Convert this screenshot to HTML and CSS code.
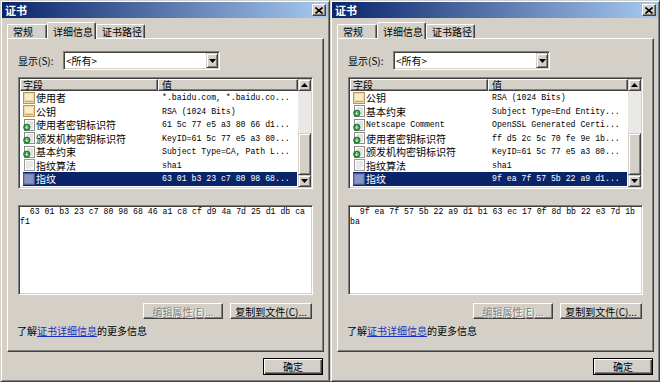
FILE: index.html
```html
<!DOCTYPE html>
<html lang="zh-CN">
<head>
    <meta charset="UTF-8">
    <title>证书</title>
    <link rel="stylesheet" href="styles.css">
</head>
<body>
    <svg class="defs" width="0" height="0">
        <symbol id="ico-cert" viewBox="0 0 12 12">
            <rect x="0.5" y="0.5" width="11" height="11" fill="#efd7a2" stroke="#b8955a"/>
            <rect x="2" y="2" width="8" height="6" fill="#f9ebc8"/>
            <path d="M2 9.5h8" stroke="#d2a868"/>
        </symbol>
        <symbol id="ico-ext" viewBox="0 0 12 12">
            <rect x="1.5" y="0.5" width="10" height="11" fill="#fff" stroke="#8c8c8c"/>
            <path d="M4 3h6M4 5h6M6 7h4M6 9h4" stroke="#c4c4c4"/>
            <circle cx="3.8" cy="8.2" r="3.2" fill="#2f9a3c" stroke="#1c6a26" stroke-width="0.8"/>
            <path d="M3.8 6.3v3.2M2.5 8.3l1.3 1.3 1.3-1.3" stroke="#fff" stroke-width="0.9" fill="none"/>
        </symbol>
        <symbol id="ico-prop" viewBox="0 0 12 12">
            <rect x="1.5" y="0.5" width="10" height="11" fill="#fff" stroke="#9a9a9a"/>
            <path d="M3 3h7M3 5h7M3 7h7M3 9h5" stroke="#d0d0d0"/>
        </symbol>
        <symbol id="ico-sel" viewBox="0 0 12 12">
            <rect x="0.5" y="0.5" width="11" height="11" fill="#7482b8" stroke="#4a5a98"/>
            <rect x="2" y="2" width="8" height="8" fill="#8894c4"/>
        </symbol>
    </svg>

    <div class="desktop">
        <!-- first certificate -->
        <div class="window">
            <div class="titlebar">
                <span class="title">证书</span>
                <span class="close-btn"><svg width="8" height="7" viewBox="0 0 8 7"><path d="M0.5 0.5l7 6M7.5 0.5l-7 6" stroke="#000" stroke-width="1.6"/></svg></span>
            </div>
            <div class="tabs">
                <div class="tab tab-general">常规</div>
                <div class="tab tab-active">详细信息</div>
                <div class="tab tab-path">证书路径</div>
            </div>
            <div class="panel">
                <div class="show-row">
                    <span class="show-label">显示(S):</span>
                    <div class="combo">
                        <span class="combo-text">&lt;所有&gt;</span>
                        <span class="combo-btn"><svg width="7" height="4" viewBox="0 0 7 4"><polygon points="0,0 7,0 3.5,4" fill="#000"/></svg></span>
                    </div>
                </div>
                <div class="listview">
                    <div class="list-body">
                        <div class="list-header">
                            <div class="col-field">字段</div>
                            <div class="col-value">值</div>
                        </div>
                        <div class="row">
                            <div class="col-field"><svg class="ico"><use href="#ico-cert"/></svg>使用者</div>
                            <div class="col-value mono">*.baidu.com, *.baidu.co...</div>
                        </div>
                        <div class="row">
                            <div class="col-field"><svg class="ico"><use href="#ico-cert"/></svg>公钥</div>
                            <div class="col-value mono">RSA (1024 Bits)</div>
                        </div>
                        <div class="row">
                            <div class="col-field"><svg class="ico"><use href="#ico-ext"/></svg>使用者密钥标识符</div>
                            <div class="col-value mono">61 5c 77 e5 a3 80 66 d1...</div>
                        </div>
                        <div class="row">
                            <div class="col-field"><svg class="ico"><use href="#ico-ext"/></svg>颁发机构密钥标识符</div>
                            <div class="col-value mono">KeyID=61 5c 77 e5 a3 80...</div>
                        </div>
                        <div class="row">
                            <div class="col-field"><svg class="ico"><use href="#ico-ext"/></svg>基本约束</div>
                            <div class="col-value mono">Subject Type=CA, Path L...</div>
                        </div>
                        <div class="row">
                            <div class="col-field"><svg class="ico"><use href="#ico-prop"/></svg>指纹算法</div>
                            <div class="col-value mono">sha1</div>
                        </div>
                        <div class="row selected">
                            <div class="col-field"><svg class="ico"><use href="#ico-sel"/></svg>指纹</div>
                            <div class="col-value mono">63 01 b3 23 c7 80 98 68...</div>
                        </div>
                    </div>
                    <div class="vscroll">
                        <div class="sb-btn"><svg width="7" height="4" viewBox="0 0 7 4"><polygon points="0,4 7,4 3.5,0" fill="#000"/></svg></div>
                        <div class="sb-track"><div class="sb-thumb"></div></div>
                        <div class="sb-btn"><svg width="7" height="4" viewBox="0 0 7 4"><polygon points="0,0 7,0 3.5,4" fill="#000"/></svg></div>
                    </div>
                </div>
                <div class="detail mono">  63 01 b3 23 c7 80 98 68 46 a1 c8 cf d9 4a 7d 25 d1 db ca
f1</div>
                <div class="btn-row">
                    <button class="btn btn-edit" disabled>编辑属性(E)...</button>
                    <button class="btn btn-copy">复制到文件(C)...</button>
                </div>
                <p class="learn">了解<a href="#">证书详细信息</a>的更多信息</p>
            </div>
            <div class="footer">
                <button class="btn btn-ok">确定</button>
            </div>
        </div>

        <!-- second certificate -->
        <div class="window">
            <div class="titlebar">
                <span class="title">证书</span>
                <span class="close-btn"><svg width="8" height="7" viewBox="0 0 8 7"><path d="M0.5 0.5l7 6M7.5 0.5l-7 6" stroke="#000" stroke-width="1.6"/></svg></span>
            </div>
            <div class="tabs">
                <div class="tab tab-general">常规</div>
                <div class="tab tab-active">详细信息</div>
                <div class="tab tab-path">证书路径</div>
            </div>
            <div class="panel">
                <div class="show-row">
                    <span class="show-label">显示(S):</span>
                    <div class="combo">
                        <span class="combo-text">&lt;所有&gt;</span>
                        <span class="combo-btn"><svg width="7" height="4" viewBox="0 0 7 4"><polygon points="0,0 7,0 3.5,4" fill="#000"/></svg></span>
                    </div>
                </div>
                <div class="listview">
                    <div class="list-body">
                        <div class="list-header">
                            <div class="col-field">字段</div>
                            <div class="col-value">值</div>
                        </div>
                        <div class="row">
                            <div class="col-field"><svg class="ico"><use href="#ico-cert"/></svg>公钥</div>
                            <div class="col-value mono">RSA (1024 Bits)</div>
                        </div>
                        <div class="row">
                            <div class="col-field"><svg class="ico"><use href="#ico-ext"/></svg>基本约束</div>
                            <div class="col-value mono">Subject Type=End Entity...</div>
                        </div>
                        <div class="row">
                            <div class="col-field"><svg class="ico"><use href="#ico-ext"/></svg><span class="mono">Netscape Comment</span></div>
                            <div class="col-value mono">OpenSSL Generated Certi...</div>
                        </div>
                        <div class="row">
                            <div class="col-field"><svg class="ico"><use href="#ico-ext"/></svg>使用者密钥标识符</div>
                            <div class="col-value mono">ff d5 2c 5c 70 fe 9e 1b...</div>
                        </div>
                        <div class="row">
                            <div class="col-field"><svg class="ico"><use href="#ico-ext"/></svg>颁发机构密钥标识符</div>
                            <div class="col-value mono">KeyID=61 5c 77 e5 a3 80...</div>
                        </div>
                        <div class="row">
                            <div class="col-field"><svg class="ico"><use href="#ico-prop"/></svg>指纹算法</div>
                            <div class="col-value mono">sha1</div>
                        </div>
                        <div class="row selected">
                            <div class="col-field"><svg class="ico"><use href="#ico-sel"/></svg>指纹</div>
                            <div class="col-value mono">9f ea 7f 57 5b 22 a9 d1...</div>
                        </div>
                    </div>
                    <div class="vscroll">
                        <div class="sb-btn"><svg width="7" height="4" viewBox="0 0 7 4"><polygon points="0,4 7,4 3.5,0" fill="#000"/></svg></div>
                        <div class="sb-track"><div class="sb-thumb"></div></div>
                        <div class="sb-btn"><svg width="7" height="4" viewBox="0 0 7 4"><polygon points="0,0 7,0 3.5,4" fill="#000"/></svg></div>
                    </div>
                </div>
                <div class="detail mono">  9f ea 7f 57 5b 22 a9 d1 b1 63 ec 17 0f 8d bb 22 e3 7d 1b
ba</div>
                <div class="btn-row">
                    <button class="btn btn-edit" disabled>编辑属性(E)...</button>
                    <button class="btn btn-copy">复制到文件(C)...</button>
                </div>
                <p class="learn">了解<a href="#">证书详细信息</a>的更多信息</p>
            </div>
            <div class="footer">
                <button class="btn btn-ok">确定</button>
            </div>
        </div>
    </div>
</body>
</html>
```

FILE: styles.css
```css
body {
    margin: 0;
    background-color: #d4d0c8;
    font-family: "Noto Sans CJK SC", "Liberation Sans", sans-serif;
    font-size: 10px;
    color: #000;
}
.defs {
    display: block;
    width: 0;
    height: 0;
    overflow: hidden;
}
.desktop {
    display: flex;
    width: 660px;
    height: 382px;
    overflow: hidden;
}
.mono {
    font-family: "Liberation Mono", "DejaVu Sans Mono", monospace;
    font-size: 8.2px;
}
.window {
    width: 330px;
    height: 382px;
    box-sizing: border-box;
    display: flex;
    flex-direction: column;
    padding: 1px;
    background-color: #d4d0c8;
    border: 1px solid;
    border-color: #d4d0c8 #404040 #404040 #d4d0c8;
    box-shadow: inset 1px 1px #fff, inset -1px -1px #808080;
}
.titlebar {
    height: 16px;
    flex-shrink: 0;
    display: flex;
    align-items: center;
    justify-content: space-between;
    padding: 0 2px 0 3px;
    background: linear-gradient(to right, #0a246a, #a6caf0);
}
.title {
    color: #fff;
    font-weight: bold;
    font-size: 11px;
    line-height: 16px;
}
.close-btn {
    width: 14px;
    height: 12px;
    box-sizing: border-box;
    display: flex;
    align-items: center;
    justify-content: center;
    background-color: #d4d0c8;
    border: 1px solid;
    border-color: #fff #404040 #404040 #fff;
    box-shadow: inset -1px -1px #808080;
}

/* tabs */
.tabs {
    display: flex;
    align-items: flex-end;
    height: 16px;
    margin-top: 4px;
    padding-left: 5px;
    flex-shrink: 0;
}
.tab {
    height: 14px;
    box-sizing: border-box;
    padding-left: 5px;
    line-height: 13px;
    border: 1px solid;
    border-bottom: none;
    border-color: #fff #404040 transparent #fff;
    border-radius: 2px 2px 0 0;
    box-shadow: inset -1px 0 #808080;
    white-space: nowrap;
}
.tab-general {
    width: 40px;
}
.tab-active {
    width: 49px;
    height: 17px;
    padding-top: 2px;
    margin-bottom: -1px;
    position: relative;
    z-index: 1;
    background-color: #d4d0c8;
}
.tab-path {
    width: 49px;
}
.panel {
    height: 314px;
    flex-shrink: 0;
    box-sizing: border-box;
    margin: 0 4px 0 5px;
    padding: 12px 10px 0 10px;
    border: 1px solid;
    border-color: #fff #404040 #404040 #fff;
    box-shadow: inset -1px -1px #808080;
}

/* show combo */
.show-row {
    display: flex;
    align-items: center;
    height: 19px;
}
.show-label {
    width: 45px;
    line-height: 19px;
}
.combo {
    width: 157px;
    height: 19px;
    box-sizing: border-box;
    display: flex;
    align-items: center;
    justify-content: space-between;
    padding: 0 1px 0 2px;
    background-color: #fff;
    border: 1px solid;
    border-color: #808080 #fff #fff #808080;
    box-shadow: inset 1px 1px #404040, inset -1px -1px #d4d0c8;
}
.combo-text {
    line-height: 15px;
}
.combo-btn {
    width: 12px;
    height: 15px;
    box-sizing: border-box;
    display: flex;
    align-items: center;
    justify-content: center;
    background-color: #d4d0c8;
    border: 1px solid;
    border-color: #d4d0c8 #404040 #404040 #d4d0c8;
    box-shadow: inset 1px 1px #fff, inset -1px -1px #808080;
}

/* list */
.listview {
    margin-top: 7px;
    height: 112px;
    box-sizing: border-box;
    display: flex;
    padding: 1px;
    background-color: #fff;
    border: 1px solid;
    border-color: #808080 #fff #fff #808080;
    box-shadow: inset 1px 1px #404040, inset -1px -1px #d4d0c8;
}
.list-body {
    flex: 1;
    min-width: 0;
}
.list-header {
    display: flex;
    height: 12px;
}
.list-header div {
    box-sizing: border-box;
    height: 12px;
    line-height: 10px;
    padding-left: 2px;
    background-color: #d4d0c8;
    border: 1px solid;
    border-color: #fff #404040 #404040 #fff;
    box-shadow: inset -1px -1px #808080;
}
.list-header .col-field {
    width: 138px;
}
.list-header .col-value {
    flex: 1;
    padding-left: 3px;
}
.row {
    display: flex;
    height: 13.5px;
    line-height: 13.5px;
    margin: 0 1px 0 3px;
    white-space: nowrap;
}
.row .col-field {
    width: 135px;
    display: flex;
    align-items: center;
}
.row .col-value {
    flex: 1;
    padding-left: 4px;
}
.ico {
    width: 12px;
    height: 12px;
    margin-right: 1px;
    flex-shrink: 0;
}
.selected {
    background-color: #0a246a;
    color: #fff;
}
.vscroll {
    width: 13px;
    display: flex;
    flex-direction: column;
}
.sb-btn, .sb-thumb {
    box-sizing: border-box;
    display: flex;
    align-items: center;
    justify-content: center;
    background-color: #d4d0c8;
    border: 1px solid;
    border-color: #d4d0c8 #404040 #404040 #d4d0c8;
    box-shadow: inset 1px 1px #fff, inset -1px -1px #808080;
}
.sb-btn {
    height: 12px;
}
.sb-track {
    flex: 1;
    display: flex;
    flex-direction: column;
    justify-content: flex-end;
    background-color: #eae8e4;
}
.sb-thumb {
    height: 42px;
}

/* detail text */
.detail {
    margin-top: 16px;
    height: 90px;
    box-sizing: border-box;
    padding: 1px 0 0 1px;
    line-height: 10px;
    white-space: pre;
    background-color: #fff;
    border: 1px solid;
    border-color: #808080 #fff #fff #808080;
    box-shadow: inset 1px 1px #404040, inset -1px -1px #d4d0c8;
}

/* buttons */
.btn {
    height: 16px;
    box-sizing: border-box;
    padding: 0;
    font: inherit;
    line-height: 13px;
    color: #000;
    background-color: #d4d0c8;
    border: 1px solid;
    border-color: #fff #404040 #404040 #fff;
    box-shadow: inset -1px -1px #808080;
}
.btn-row {
    display: flex;
    justify-content: flex-end;
    gap: 7px;
    margin: 8px 1px 0 0;
}
.btn-edit {
    width: 80px;
    color: #808080;
    text-shadow: 1px 1px #fff;
}
.btn-copy {
    width: 82px;
}
.learn {
    margin: 6px 0 0 -1px;
    line-height: 12px;
}
.learn a {
    color: #1f2fc0;
}
.footer {
    display: flex;
    justify-content: flex-end;
    padding: 6px 5px 0 0;
}
.btn-ok {
    width: 60px;
    height: 17px;
    border: 1px solid #000;
    box-shadow: inset 1px 1px #fff, inset -1px -1px #404040, inset -2px -2px #808080;
}
```
